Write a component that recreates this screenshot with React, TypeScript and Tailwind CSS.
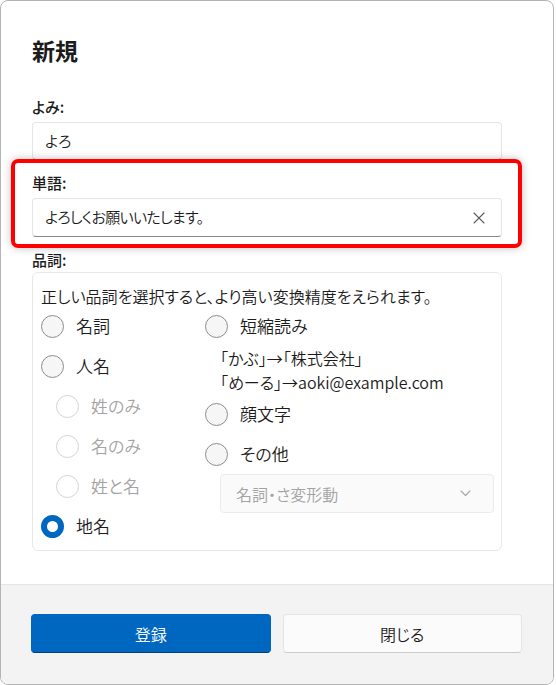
import React, { useState } from 'react';

const font = "[font-family:'Noto_Sans_CJK_JP','Noto_Sans',sans-serif] [font-feature-settings:'palt']";

const ClearIcon = () => (
    <svg width="12" height="12" viewBox="0 0 12 12" fill="none" stroke="#5c5c5c" strokeWidth="1.1" strokeLinecap="round"><line x1="1" y1="1" x2="11" y2="11" /><line x1="11" y1="1" x2="1" y2="11" /></svg>
);

const ChevronIcon = () => (
    <svg width="11" height="7" viewBox="0 0 11 7" fill="none" stroke="#a6a6a6" strokeWidth="1.1" strokeLinecap="round" strokeLinejoin="round"><polyline points="1 1 5.5 5.5 10 1" /></svg>
);

interface RadioProps {
    label: string;
    checked?: boolean;
    disabled?: boolean;
    onSelect?: () => void;
}

const Radio: React.FC<RadioProps> = ({ label, checked, disabled, onSelect }) => {
    let circle = 'border border-[#8d8d8d] bg-[#f6f6f6]';
    if (disabled) circle = 'border border-[#d4d4d4] bg-white';
    if (checked) circle = 'border-[6px] border-[#0067c0] bg-white';
    return (
        <div
            onClick={disabled ? undefined : onSelect}
            className={`flex items-center h-[40px] gap-[12px] ${disabled ? 'text-[#a3a3a3]' : 'text-[#1b1b1b] cursor-pointer'}`}
        >
            <span className={`w-[23px] h-[23px] rounded-full shrink-0 ${circle}`} />
            <span className="text-[17px] leading-[20px]">{label}</span>
        </div>
    );
};

export default function App() {
    const [kind, setKind] = useState('地名');
    const [word, setWord] = useState('よろしくお願いいたします。');

    return (
        <div className={`relative w-[556px] h-[685px] bg-white font-[350] ${font}`}>
            <div className="w-[554px] h-[685px] border border-[#b4b4b4] rounded-[8px] overflow-hidden flex flex-col bg-white">
                <div className="flex-1 pl-[31px] pr-[51px] pt-[35px]">
                    <h1 className="text-[23px] leading-[28px] font-semibold text-[#1b1b1b]">新規</h1>

                    <div className="mt-[33px] h-[20px] text-[15px] leading-[20px] font-medium text-[#1b1b1b]">よみ:</div>
                    <div className="mt-[5px] h-[38px] flex items-center px-[12px] rounded-[4px] border border-[#e5e5e5] border-b-[#8a8a8a] bg-white text-[15px] text-[#1b1b1b]">
                        よろ
                    </div>

                    <div className="mt-[13px] h-[20px] text-[15px] leading-[20px] font-medium text-[#1b1b1b]">単語:</div>
                    <div className="mt-[5px] h-[39px] flex items-center pl-[12px] pr-[14px] rounded-[4px] border border-[#e5e5e5] border-b-[#8a8a8a] bg-white">
                        <input
                            value={word}
                            onChange={e => setWord(e.target.value)}
                            className="flex-1 outline-none bg-transparent text-[15px] tracking-[-0.7px] text-[#1b1b1b]"
                        />
                        <button onClick={() => setWord('')} className="w-[16px] h-[16px] flex items-center justify-center">
                            <ClearIcon />
                        </button>
                    </div>

                    <div className="mt-[13px] h-[20px] text-[15px] leading-[20px] font-medium text-[#1b1b1b]">品詞:</div>
                    <div className="mt-[2px] h-[279px] rounded-[6px] border border-[#e8e8e8] pl-[8px] pr-[7px] pt-[13px]">
                        <p className="text-[16px] leading-[20px] text-[#1b1b1b]">正しい品詞を選択すると、より高い変換精度をえられます。</p>
                        <div className="flex">
                            <div className="w-[164px] flex flex-col">
                                <Radio label="名詞" checked={kind === '名詞'} onSelect={() => setKind('名詞')} />
                                <Radio label="人名" checked={kind === '人名'} onSelect={() => setKind('人名')} />
                                <div className="pl-[15px] flex flex-col">
                                    <Radio label="姓のみ" disabled />
                                    <Radio label="名のみ" disabled />
                                    <Radio label="姓と名" disabled />
                                </div>
                                <Radio label="地名" checked={kind === '地名'} onSelect={() => setKind('地名')} />
                            </div>
                            <div className="flex-1 flex flex-col">
                                <Radio label="短縮読み" checked={kind === '短縮読み'} onSelect={() => setKind('短縮読み')} />
                                <div className="pl-[15px] text-[16px] leading-[24px] text-[#1b1b1b]">
                                    <div>「かぶ」→「株式会社」</div>
                                    <div>「めーる」→aoki@example.com</div>
                                </div>
                                <Radio label="顔文字" checked={kind === '顔文字'} onSelect={() => setKind('顔文字')} />
                                <Radio label="その他" checked={kind === 'その他'} onSelect={() => setKind('その他')} />
                                <div className="ml-[15px] h-[39px] flex items-center justify-between pl-[15px] pr-[22px] rounded-[4px] border border-[#ebebeb] bg-[#fafafa] text-[16px] text-[#a3a3a3]">
                                    <span>名詞・さ変形動</span>
                                    <ChevronIcon />
                                </div>
                            </div>
                        </div>
                    </div>
                </div>

                <div className="h-[100px] shrink-0 border-t border-[#e5e5e5] bg-[#f3f3f3] pl-[30px] pr-[31px] pt-[29px] flex gap-[12px]">
                    <button className="flex-1 h-[39px] rounded-[4px] bg-[#0067c0] border border-[#0067c0] border-b-[#003e73] text-white text-[16px]">登録</button>
                    <button className="flex-1 h-[39px] rounded-[4px] bg-[#fbfbfb] border border-[#e5e5e5] border-b-[#cccccc] text-[#1b1b1b] text-[16px]">閉じる</button>
                </div>
            </div>

            <div className="absolute left-[11px] top-[159px] w-[511px] h-[89px] border-4 border-[#ff0000] rounded-[7px] shadow-[0_0_8px_rgba(0,0,0,0.25)] pointer-events-none" />
        </div>
    );
}
